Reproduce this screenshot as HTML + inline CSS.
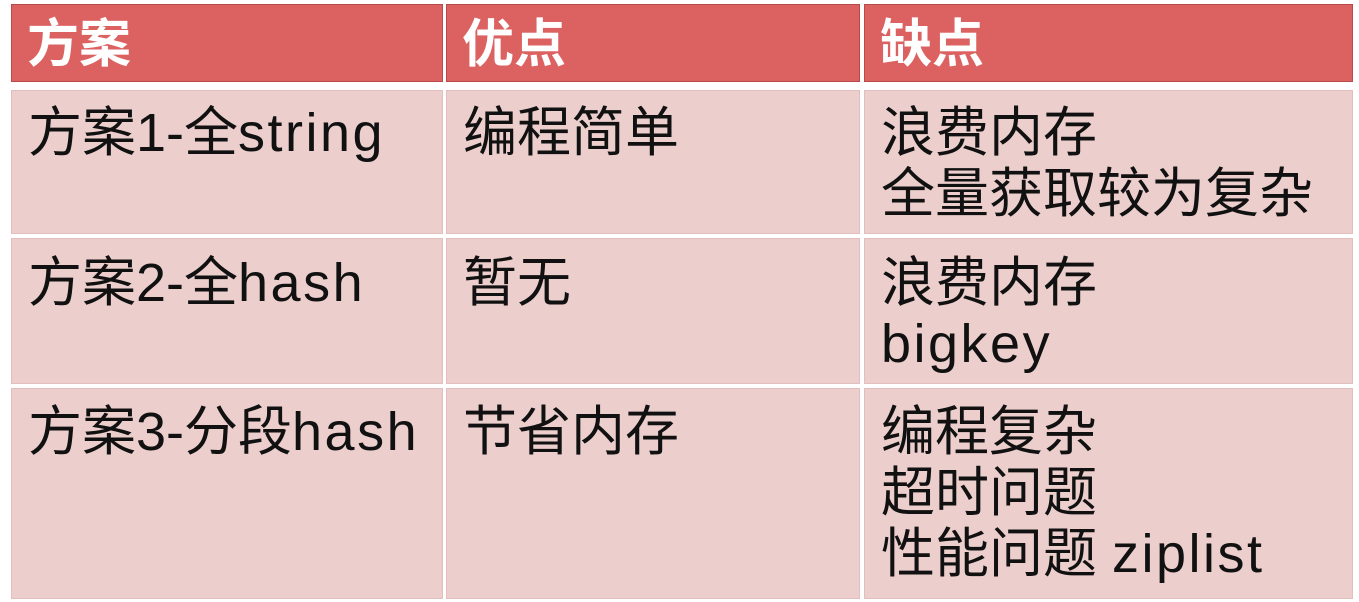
<!DOCTYPE html><html><head><meta charset="utf-8"><style>
body{margin:0;width:1359px;height:602px;background:#fff;overflow:hidden;font-family:"Liberation Sans","Noto Sans CJK SC",sans-serif;}
.c{position:absolute;box-sizing:border-box;padding-left:16px;font-size:54px;line-height:61px;color:#111;background:#eccfcd;border:1px solid #e2bfbd}
.l{letter-spacing:2.5px}
.h{background:#dc6262;color:#fff;font-weight:bold;font-size:52px;line-height:80px;border:1px solid #b84a4a;padding-left:15px}
</style></head><body>
<div class="c h" style="left:11px;top:4px;width:432px;height:78px">方案</div>
<div class="c h" style="left:446px;top:4px;width:414px;height:78px">优点</div>
<div class="c h" style="left:864px;top:4px;width:489px;height:78px">缺点</div>

<div class="c" style="left:11px;top:90px;width:432px;height:144px;padding-top:12px">方案1-全<span class="l">string</span></div>
<div class="c" style="left:446px;top:90px;width:414px;height:144px;padding-top:12px">编程简单</div>
<div class="c" style="left:864px;top:90px;width:489px;height:144px;padding-top:12px">浪费内存<br>全量获取较为复杂</div>

<div class="c" style="left:11px;top:238px;width:432px;height:146px;padding-top:14px">方案2-全<span class="l">hash</span></div>
<div class="c" style="left:446px;top:238px;width:414px;height:146px;padding-top:14px">暂无</div>
<div class="c" style="left:864px;top:238px;width:489px;height:146px;padding-top:14px">浪费内存<br><span class="l">bigkey</span></div>

<div class="c" style="left:11px;top:388px;width:432px;height:211px;padding-top:13px">方案3-分段<span class="l">hash</span></div>
<div class="c" style="left:446px;top:388px;width:414px;height:211px;padding-top:13px">节省内存</div>
<div class="c" style="left:864px;top:388px;width:489px;height:211px;padding-top:13px">编程复杂<br>超时问题<br>性能问题 <span class="l">ziplist</span></div>
</body></html>
